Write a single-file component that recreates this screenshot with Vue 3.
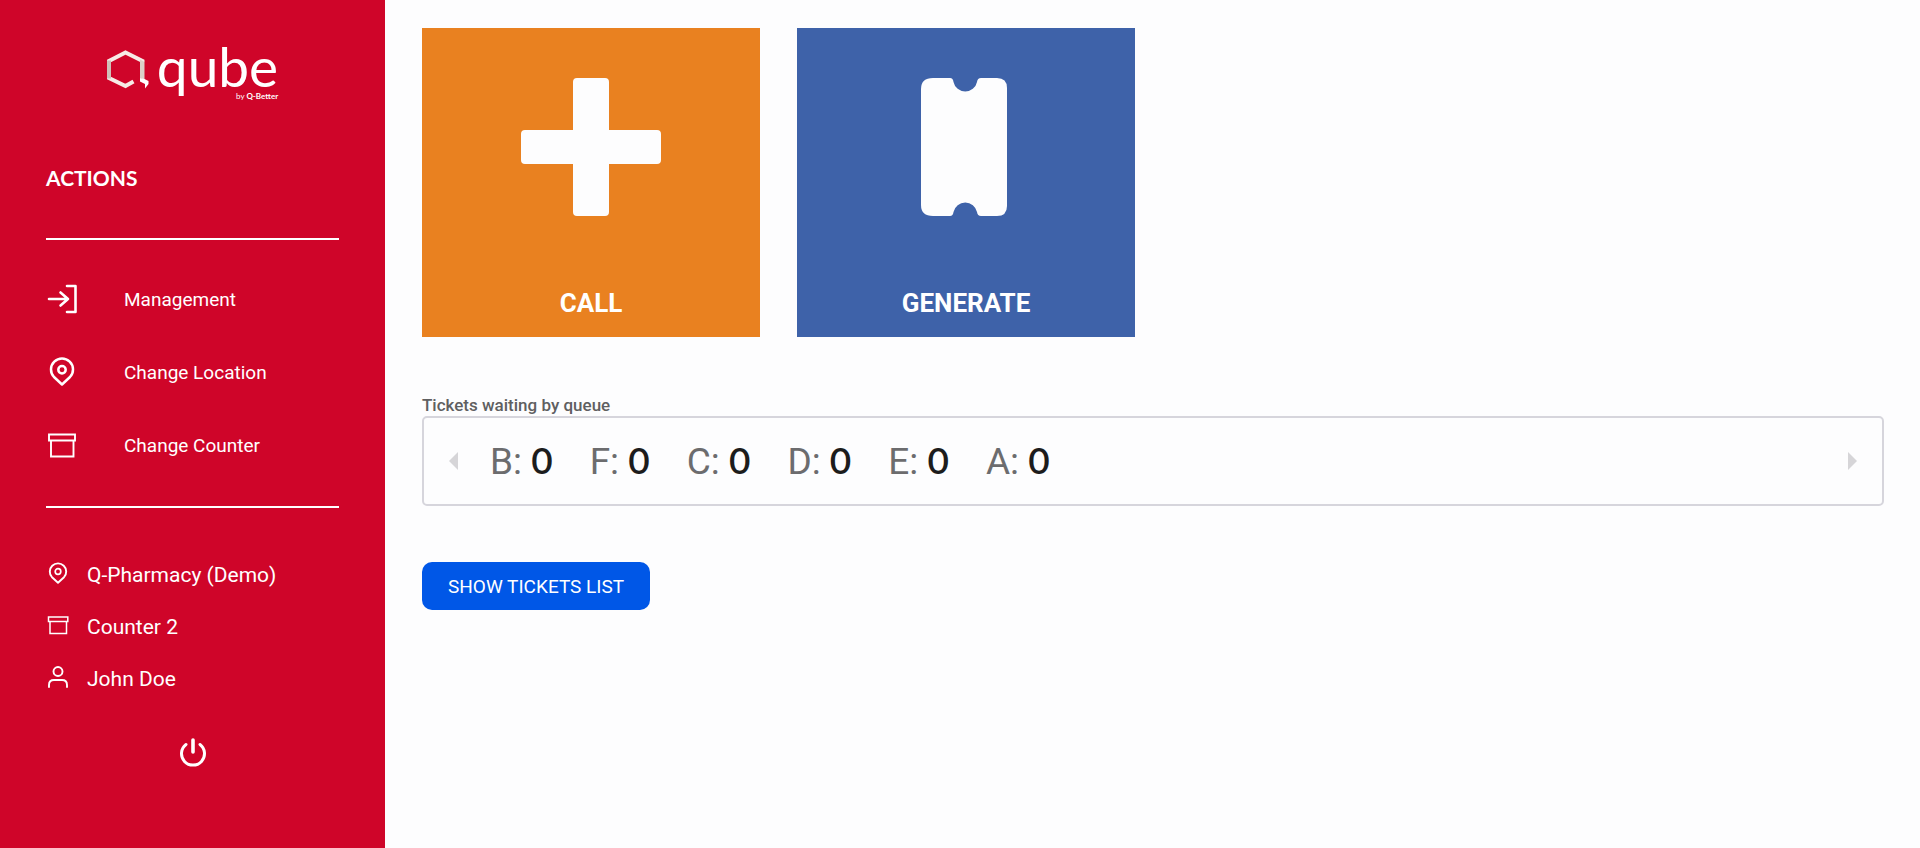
<script setup>
const queues = [
  { name: 'B', waiting: 0 },
  { name: 'F', waiting: 0 },
  { name: 'C', waiting: 0 },
  { name: 'D', waiting: 0 },
  { name: 'E', waiting: 0 },
  { name: 'A', waiting: 0 },
]
</script>

<template>
  <div class="app">
    <aside class="sidebar">
      <div class="logo">
        <svg class="logo-mark" width="42" height="40" viewBox="0 0 42 40" aria-hidden="true">
          <path d="M35.500 12 V11 L18.500 2.500 L2 11 V28 L18.500 36 L26.500 31.500" fill="none" stroke="#f7ebe6" stroke-width="4" />
          <path d="M2 10.500 V28.500" fill="none" stroke="#cfc0b8" stroke-width="4" />
          <path d="M33 9.500 L37.500 12 V30 L33 28 Z" fill="#dccfc8" />
          <path d="M33 28 L37.500 29 L41.500 31 V34 L38 38.500 L38 34 L33 31.500 Z" fill="#fff" />
        </svg>
        <div class="wordmark">
          <span class="brand">qube</span>
          <span class="byline">by <b>Q-Better</b></span>
        </div>
      </div>

      <h2 class="heading">ACTIONS</h2>

      <nav class="actions">
        <button type="button" class="action">
          <svg class="icon-lg" viewBox="0 0 32 32" aria-hidden="true">
            <path d="M3 15 H22 M14.500 8.500 L22 15 L14.500 21.500" stroke-width="2.600" />
            <path d="M21 2 H29.500 V28 H21" stroke-width="2.600" />
          </svg>
          Management
        </button>
        <button type="button" class="action">
          <svg class="icon-lg" viewBox="0 0 32 32" aria-hidden="true">
            <path d="M16 27.500 L8 20 A11 11 0 1 1 24 20 Z" stroke-width="2.500" />
            <circle cx="16" cy="12.800" r="3.700" stroke-width="2.500" />
          </svg>
          Change Location
        </button>
        <button type="button" class="action">
          <svg class="icon-lg square" viewBox="0 0 32 32" aria-hidden="true">
            <path d="M3 4.500 H29 V10.500 H3 Z M5 10.500 V26.500 H27.500 V10.500" stroke-width="1.900" />
          </svg>
          Change Counter
        </button>
      </nav>

      <ul class="session">
        <li>
          <svg class="icon-sm" viewBox="0 0 24 24" aria-hidden="true">
            <path d="M12 19.800 L6 14.200 A8.200 8.200 0 1 1 18 14.200 Z" stroke-width="1.900" />
            <circle cx="12" cy="8.500" r="2.800" stroke-width="1.700" />
          </svg>
          Q-Pharmacy (Demo)
        </li>
        <li>
          <svg class="icon-sm square" viewBox="0 0 24 24" aria-hidden="true">
            <path d="M2.500 2 H21.800 V6.500 H2.500 Z M4 6.500 V18.500 H20.500 V6.500" stroke-width="1.500" />
          </svg>
          Counter 2
        </li>
        <li>
          <svg class="icon-sm" viewBox="0 0 24 24" aria-hidden="true">
            <circle cx="12" cy="4.500" r="4.500" stroke-width="1.900" />
            <path d="M3 20 V18 Q3 13 8 13 H16 Q21 13 21 18 V20" stroke-width="1.900" />
          </svg>
          John Doe
        </li>
      </ul>

      <button type="button" class="power" aria-label="Log out">
        <svg width="32" height="32" viewBox="0 0 32 32" aria-hidden="true">
          <path d="M16 4 V16" stroke-width="3.600" />
          <path d="M9 8.500 A11.500 11.500 0 1 0 23 8.500" stroke-width="3" />
        </svg>
      </button>
    </aside>

    <main class="content">
      <div class="tiles">
        <button type="button" class="tile call">
          <svg width="140" height="138" viewBox="0 0 140 138" aria-hidden="true">
            <path d="M56 0 H84 Q88 0 88 4 V52 H136 Q140 52 140 56 V82 Q140 86 136 86 H88 V134 Q88 138 84 138 H56 Q52 138 52 134 V86 H4 Q0 86 0 82 V56 Q0 52 4 52 H52 V4 Q52 0 56 0 Z" />
          </svg>
          <span>CALL</span>
        </button>
        <button type="button" class="tile generate">
          <svg width="90" height="138" viewBox="0 0 90 138" aria-hidden="true">
            <path d="M12 0 H29 Q32 0 32.500 4 A12 12 0 0 0 56 4 Q56.500 0 60 0 H76 Q86 0 86 10 V128 Q86 138 76 138 H60 Q56.500 138 56 134 A12 12 0 0 0 32.500 134 Q32 138 29 138 H12 Q0 138 0 127 V11 Q0 0 12 0 Z" />
          </svg>
          <span>GENERATE</span>
        </button>
      </div>

      <h3 class="queue-title">Tickets waiting by queue</h3>
      <section class="queue-box" aria-label="Tickets waiting by queue">
        <button type="button" class="arrow" aria-label="Previous">
          <svg width="9" height="18" viewBox="0 0 9 18" aria-hidden="true"><path d="M9 0 V18 L0 9 Z" /></svg>
        </button>
        <ul class="queues">
          <li v-for="queue in queues" :key="queue.name">{{ queue.name }}: <strong>{{ queue.waiting }}</strong></li>
        </ul>
        <button type="button" class="arrow" aria-label="Next">
          <svg width="9" height="18" viewBox="0 0 9 18" aria-hidden="true"><path d="M0 0 V18 L9 9 Z" /></svg>
        </button>
      </section>

      <button type="button" class="show-list">SHOW TICKETS LIST</button>
    </main>
  </div>
</template>

<style>
body {
  margin: 0;
  background: #fdfdfe;
}
</style>

<style scoped>
.app {
  display: flex;
  min-height: 100vh;
  font-family: Roboto, "Liberation Sans", sans-serif;
}

button {
  padding: 0;
  border: 0;
  background: none;
  color: inherit;
  font: inherit;
  cursor: pointer;
}

ul {
  margin: 0;
  padding: 0;
  list-style: none;
}

svg {
  display: block;
  flex: none;
  overflow: visible;
}

.sidebar {
  box-sizing: border-box;
  flex: 0 0 385px;
  display: flex;
  flex-direction: column;
  padding: 40px 46px;
  background: #cf0529;
  color: #fff;
}

.sidebar svg {
  fill: none;
  stroke: #fff;
  stroke-linecap: round;
  stroke-linejoin: round;
}

.logo {
  display: flex;
  justify-content: center;
  gap: 8px;
  height: 64px;
}

.sidebar .logo-mark {
  margin-top: 10px;
  stroke: none;
  stroke-linecap: butt;
  stroke-linejoin: miter;
}

.wordmark {
  display: flex;
  flex-direction: column;
  font-family: Lato, sans-serif;
}

.brand {
  font-size: 55px;
  line-height: 52px;
}

.byline {
  align-self: flex-end;
  font-size: 8px;
  line-height: 8px;
}

.heading {
  margin: 60px 0 46px;
  font-family: Lato, sans-serif;
  font-size: 21px;
  line-height: 28px;
  font-weight: 700;
}

.actions {
  display: flex;
  flex-direction: column;
  padding: 23px 0 24px;
  border-top: 2px solid #fff;
  border-bottom: 2px solid #fff;
}

.action {
  display: flex;
  align-items: center;
  gap: 46px;
  height: 73px;
  font-size: 19px;
  text-align: left;
}

.icon-lg {
  width: 32px;
  height: 32px;
}

.icon-sm {
  width: 24px;
  height: 24px;
}

.sidebar .square {
  stroke-linejoin: miter;
}

.session {
  padding-top: 41px;
}

.session li {
  display: flex;
  align-items: center;
  gap: 17px;
  height: 52px;
  font-size: 21px;
}

.power {
  align-self: center;
  margin-top: 31px;
}

.content {
  flex: 1;
  min-width: 0;
  padding: 28px 36px 28px 37px;
}

.tiles {
  display: flex;
  gap: 37px;
}

.tile {
  box-sizing: border-box;
  display: flex;
  flex-direction: column;
  align-items: center;
  justify-content: space-between;
  width: 338px;
  height: 309px;
  padding: 50px 0 17px;
  color: #fff;
  font-size: 26px;
  line-height: 34px;
  font-weight: 700;
}

.tile svg {
  fill: #fdfdfe;
}

.call {
  background: #e98120;
}

.generate {
  background: #3e62a9;
}

.queue-title {
  margin: 58px 0 0;
  color: #5f5f61;
  font-size: 17px;
  line-height: 21px;
  font-weight: 500;
}

.queue-box {
  display: flex;
  align-items: center;
  box-sizing: border-box;
  height: 90px;
  padding: 0 25px;
  border: 2px solid #d6d5dc;
  border-radius: 5px;
}

.arrow svg {
  fill: #d6d5d8;
}

.queues {
  flex: 1;
  display: flex;
  gap: 37px;
  padding-left: 32px;
  color: #6c6c6e;
  font-size: 37px;
  line-height: 46px;
  font-weight: 400;
}

.queues strong {
  color: #1c1c1c;
  font-family: Lato, sans-serif;
  font-size: 37px;
  font-weight: 600;
}

.show-list {
  margin-top: 56px;
  padding: 0 26px;
  height: 48px;
  border-radius: 10px;
  background: #0057e7;
  color: #fff;
  font-size: 19px;
}
</style>
